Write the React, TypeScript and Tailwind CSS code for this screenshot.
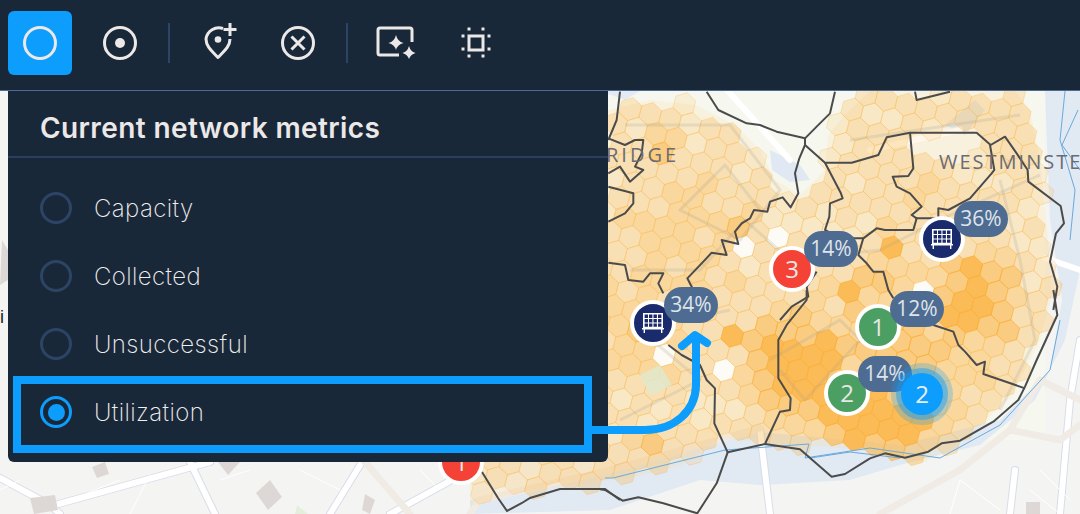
const hexRegion: number[][] = [
  [470, 470], [470, 506], [520, 492], [600, 482], [640, 476], [680, 466], [720, 438], [760, 442], [830, 447],
  [880, 452], [925, 462], [960, 442], [1010, 398], [1040, 340], [1052, 295], [1047, 230], [1040, 160], [1030, 110],
  [1015, 91], [870, 91], [845, 115], [828, 135], [825, 170], [800, 195], [775, 180], [760, 150], [735, 125],
  [695, 105], [650, 100], [608, 110], [590, 300],
]

const hexHoles: number[][][] = [
  [[915, 130], [972, 130], [985, 150], [950, 165], [915, 158]],
]

// x, y, radius, strength
const hotSpots: number[][] = [
  [975, 292, 36, 1], [955, 312, 24, 0.95], [800, 365, 50, 1], [860, 410, 46, 1], [905, 420, 32, 1], [772, 345, 26, 0.9],
  [735, 330, 12, 0.95], [645, 445, 10, 1], [745, 222, 10, 0.85], [855, 287, 16, 0.95], [893, 243, 14, 0.85], [663, 147, 16, 0.6],
  [995, 320, 24, 0.62], [640, 330, 60, 0.48], [900, 340, 80, 0.62], [680, 240, 80, 0.38], [920, 210, 80, 0.26],
]

const whiteSpots: number[][] = [[750, 241], [783, 231], [668, 362], [726, 378], [926, 286], [664, 345]]

const inside = (x: number, y: number, poly: number[][]) => {
  let hit = false
  for (let i = 0, j = poly.length - 1; i < poly.length; j = i++) {
    const [xi, yi] = poly[i]
    const [xj, yj] = poly[j]
    if (yi > y !== yj > y && x < ((xj - xi) * (y - yi)) / (yj - yi) + xi) hit = !hit
  }
  return hit
}

const noise = (a: number, b: number) => {
  const s = Math.sin(a * 127.1 + b * 311.7) * 43758.5453
  return s - Math.floor(s)
}

const buildHexes = () => {
  const out: { points: string; alpha: number; white: boolean }[] = []
  const pitch = 20.5
  const rowPitch = pitch * 0.866
  const r = pitch / Math.sqrt(3)
  const rot = (14 * Math.PI) / 180
  const cos = Math.cos(rot)
  const sin = Math.sin(rot)
  for (let row = -30; row < 30; row++) {
    for (let col = -40; col < 40; col++) {
      const gx = col * pitch + (row % 2 !== 0 ? pitch / 2 : 0)
      const gy = row * rowPitch
      const x = 957 + gx * cos - gy * sin
      const y = 282 + gx * sin + gy * cos
      if (!inside(x, y, hexRegion) || hexHoles.some((h) => inside(x, y, h))) continue
      let level = 0.14 + noise(col, row) * 0.14
      for (const [hx, hy, hr, hs] of hotSpots) {
        const d = ((x - hx) ** 2 + (y - hy) ** 2) / (hr * hr)
        level = Math.max(level, hs * Math.exp(-d * 0.7) + (noise(row, col) - 0.5) * 0.2)
      }
      const alpha = level > 0.72 ? 0.85 : level > 0.48 ? 0.58 : level > 0.3 ? 0.4 : level > 0.18 ? 0.26 : 0.14
      const pts: string[] = []
      for (let k = 0; k < 6; k++) {
        const a = rot + Math.PI / 6 + (k * Math.PI) / 3
        pts.push(`${(x + r * Math.cos(a)).toFixed(1)},${(y + r * Math.sin(a)).toFixed(1)}`)
      }
      const white = whiteSpots.some(([wx, wy]) => Math.hypot(x - wx, y - wy) < 10.5)
      out.push({ points: pts.join(' '), alpha, white })
    }
  }
  return out
}

const hexes = buildHexes()

const upperLines = [
  '320,5 355,60 440,100 480,105 530,125 615,145 650,110 690,70 705,5',
  '615,145 615,165 598,205 585,250 595,310 572,352 548,322 510,335 502,365 462,360 450,385 425,400 405,425 415,462 365,450 380,495 335,488 310,515 262,565 280,600',
  '615,165 675,218 755,218 835,195 860,142 930,128 1130,128 1172,165 1215,140 1250,190 1283,240 1285,275 1382,348 1392,400 1368,430 1350,515 1372,590 1360,660',
  '675,218 722,308 728,325 690,340 688,380 675,420 720,445 790,445 830,415 855,420 940,420 950,385 935,375 965,350 930,310 890,290 878,260 925,258 940,235 930,128',
  '790,445 775,495 800,520 820,545 850,545 865,600 880,625',
  '945,385 1015,385 1015,355 1045,360 1110,325 1175,250 1183,240 1170,165',
  '650,545 620,590 625,620 575,650 540,690',
  '945,5 950,30 1050,5',
  '60,5 50,90 25,150',
  '25,145 75,165 105,150 130,150 125,190 105,230 130,240 90,275 60,230 25,250',
  '25,290 100,310 100,340 75,370 25,395',
  '25,518 75,525 85,570 130,575 150,550 190,550 175,580 190,610',
]

const lowerLines = [
  '205,165 245,195 300,225 320,270 345,295 343,400 383,487 495,462 540,365 570,360 572,325 535,265 535,150 560,105 620,30 620,0',
  '383,487 350,580 292,670 190,640 115,622 68,632 15,600 0,598',
  '495,462 600,478 695,560 735,552 810,505 855,490 915,503 985,485 1025,460 1080,452 1180,395 1255,330 1275,290 1310,210 1372,75 1360,0',
  '1275,295 1150,252 1155,215 1130,225 1095,185 1075,165 1060,125 1000,105',
]

const Building = () => (
  <svg viewBox="0 0 22 20" className="h-5 w-[22px]" fill="#fff">
    <path d="M1 0H21V15H1Z" />
    <path d="M2.6 1.6h3.4v3.4H2.6zM7 1.6h3.4v3.4H7zM11.5 1.6h3.4v3.4h-3.4zM16 1.6h3.4v3.4H16zM2.6 6h3.4v3.4H2.6zM7 6h3.4v3.4H7zM11.5 6h3.4v3.4h-3.4zM16 6h3.4v3.4H16zM2.6 10.4h3.4v3.4H2.6zM7 10.4h3.4v3.4H7zM11.5 10.4h3.4v3.4h-3.4zM16 10.4h3.4v3.4H16z" fill="#1a2b6d" />
    <path d="M0 15h22v1.4H20.4V20H19v-3.6H3V20H1.6v-3.6H0Z" />
  </svg>
)

const Badge = ({ label, className }: { label: string; className: string }) => (
  <div className={`absolute flex h-9 w-[54px] items-center justify-center rounded-[18px] bg-[#4e6b91] font-['Open_Sans',sans-serif] text-[21px] text-[#dfe4ea] ${className}`}>
    {label}
  </div>
)

const Pin = ({ className, children }: { className: string; children: React.ReactNode }) => (
  <div className={`absolute flex h-[46px] w-[46px] items-center justify-center rounded-full border-4 border-white font-['Open_Sans',sans-serif] text-[24px] text-[#e6e8e6] ${className}`}>
    {children}
  </div>
)

const Metric = ({ label, active }: { label: string; active?: boolean }) => (
  <div className="flex h-[68px] items-center pl-8">
    <div className={`flex h-8 w-8 items-center justify-center rounded-full border-[3.5px] ${active ? 'border-[#0d9dfc]' : 'border-[#2c4565]'}`}>
      {active && <div className="h-[17px] w-[17px] rounded-full bg-[#0d9dfc]" />}
    </div>
    <span className="ml-[22px] pt-0.5 font-['Inter',sans-serif] text-[24px] font-extralight tracking-[0.4px] text-[#f1eeee]">{label}</span>
  </div>
)

const ToolButton = ({ active, view, children }: { active?: boolean; view: string; children: React.ReactNode }) => (
  <button className={`flex h-16 w-16 items-center justify-center rounded-md ${active ? 'bg-[#0d9dfc]' : ''}`}>
    <svg viewBox={view} className="h-16 w-16" fill="none" stroke="#ece8e8" strokeWidth="3">
      {children}
    </svg>
  </button>
)

const Divider = () => <div className="h-10 w-0.5 bg-[#2c4565]" />

const MapLayer = () => (
  <svg viewBox="0 91 1080 423" className="block h-[423px] w-[1080px]">
    <rect x="0" y="91" width="1080" height="423" fill="#f4f5f3" />
    <path d="M608 91 H1045 V440 H608Z" fill="#f6f8ef" />
    {/* river and ponds */}
    <path d="M600 470 L760 432 L900 445 L1000 420 L1050 370 L1062 300 L1050 220 L1045 91 L1080 91 L1080 270 L1065 340 L1035 400 L980 445 L900 465 L850 480 L760 485 L700 480 L610 510 L470 514 L470 500Z" fill="#e1e9f3" />
    <path d="M770 150 L800 165 L810 180 L790 182 L772 170Z" fill="#dfe8f3" />
    <path d="M945 125 L975 100 L985 110 L965 135Z" fill="#dfe8f3" />
    <path d="M600 91 L640 91 L625 100Z" fill="#e3eaf3" />
    {/* roads */}
    <g fill="none" strokeLinecap="round" strokeLinejoin="round">
      <g stroke="#d9dcea" strokeWidth="8">
        <path d="M0 478 L50 505 L60 514" />
        <path d="M55 505 L210 462" />
        <path d="M190 462 L215 514" />
        <path d="M330 514 L362 462" />
        <path d="M390 514 L470 470" />
        <path d="M760 430 L770 514" />
        <path d="M1060 514 L1070 400 L1080 340" />
        <path d="M1010 514 L1015 470" />
      </g>
      <g stroke="#ffffff" strokeWidth="6">
        <path d="M0 478 L50 505 L60 514" />
        <path d="M55 505 L210 462" />
        <path d="M190 462 L215 514" />
        <path d="M330 514 L362 462" />
        <path d="M390 514 L470 470" />
        <path d="M760 430 L770 514" />
        <path d="M1060 514 L1070 400 L1080 340" />
        <path d="M1010 514 L1015 470" />
        <path d="M1045 258 L1080 270" />
        <path d="M870 150 L960 130" />
        <path d="M728 91 L790 160" />
      </g>
      <g stroke="#f1ebe6" strokeWidth="7">
        <path d="M365 462 L410 514" />
        <path d="M470 514 L480 500 L610 470 L760 428" />
        <path d="M880 514 L960 470 L1010 430 L1060 440 L1080 425" />
        <path d="M1010 430 L1040 380 L1080 400" />
      </g>
      <g stroke="#ffffff" strokeWidth="1">
        <path d="M0 490 L20 480 M70 500 L120 480 M130 514 L150 475 M220 480 L250 470 M300 470 L340 490 M420 470 L440 490" />
        <path d="M950 514 L960 480 L1000 510 M1040 470 L1070 500 M1030 490 L1060 514" />
      </g>
    </g>
    <g fill="#ddd8d6">
      <path d="M256 493 L270 480 L282 497 L268 510Z" />
      <path d="M30 498 L55 495 L58 510 L34 514Z" />
      <path d="M92 467 L105 462 L109 474 L97 478Z" />
      <path d="M218 462 L240 462 L228 475Z" />
      <path d="M1026 502 L1040 502 L1040 514 L1026 514Z" />
      <path d="M365 494 L375 500 L370 514 L362 510Z" />
    </g>
    <path d="M297 505 L308 514 L295 514Z" fill="#e5eedd" />
    <path d="M2 240 L8 250 L8 280 L0 285Z" fill="#ddd8d6" />
    {/* heat hexes */}
    <polygon points={hexRegion.map((p) => p.join(',')).join(' ')} fill="#fbdca0" fillOpacity="0.22" />
    <g>
      {hexes.map((h, i) => (
        <polygon key={i} points={h.points} fill={h.white ? '#ffffff' : '#fcb23e'} fillOpacity={h.white ? 0.7 : h.alpha} stroke="#fbab2c" strokeOpacity={h.alpha > 0.5 ? 0.7 : 0.32} strokeWidth="0.8" />
      ))}
    </g>
    {/* ghost streets through the heat layer */}
    <g fill="none" stroke="#a89f90" strokeOpacity="0.22" strokeWidth="3" strokeLinejoin="round">
      <path d="M625 125 L730 125 L780 190 L740 240 L680 210 L725 165 L760 210" />
      <path d="M630 270 L700 270 L745 220 L790 260 L880 250 L950 215 L1040 175" />
      <path d="M620 420 L700 380 L640 330 L730 310" />
      <path d="M770 360 L840 320 L860 340 L805 400 L780 370" />
      <path d="M1000 180 L1020 260 L1035 340 L1000 410" />
      <path d="M850 140 L1020 115" />
    </g>
    <path d="M640 375 L660 365 L672 385 L650 395Z" fill="#dfead0" fillOpacity="0.8" />
    {/* water outlines */}
    <g fill="none" stroke="#6aa9dc" strokeWidth="1">
      <path d="M605 478 L613 478 L725 450 L809 444 L805 458 L870 448 L940 458 L1000 425 L1050 370 L1060 320" />
      <path d="M810 458 L850 452 L900 458" />
      <path d="M1065 91 L1060 140 L1075 190 L1070 240 M1078 110 L1062 145 L1080 170" />
    </g>
    {/* ward boundaries */}
    <g fill="none" stroke="#4b4b4b" strokeWidth="6" strokeLinejoin="round" transform="translate(600 90) scale(0.33333)">
      {upperLines.map((p, i) => <polyline key={i} points={p} />)}
    </g>
    <g fill="none" stroke="#4b4b4b" strokeWidth="6" strokeLinejoin="round" transform="translate(600 290) scale(0.33333)">
      {lowerLines.map((p, i) => <polyline key={i} points={p} />)}
    </g>
    <polyline points="482,472 498,498 507,511 522,503 530,498 560,489 605,489 620,500" fill="none" stroke="#4b4b4b" strokeWidth="2" />
    <g fontFamily="'Open Sans', sans-serif" fill="#6c6a72" fontSize="20">
      <text x="606" y="162" letterSpacing="3">RIDGE</text>
      <text x="939" y="169" letterSpacing="2">WESTMINSTE</text>
    </g>
    <text x="0" y="323" fontFamily="'Liberation Sans', sans-serif" fontSize="18" fill="#222">i</text>
  </svg>
)

export default function App() {
  return (
    <div className="flex h-[514px] w-[1080px] flex-col overflow-hidden bg-[#192839]">
      <header className="flex h-[91px] shrink-0 items-center gap-4 border-b border-[#4c6a94] bg-[#192839] pb-[5px] pl-2">
        <ToolButton active view="8 11 64 64">
          <circle cx="40" cy="43" r="15.5" />
        </ToolButton>
        <ToolButton view="88 11 64 64">
          <circle cx="120" cy="43" r="15.5" />
          <circle cx="120" cy="43" r="5" fill="#ece8e8" stroke="none" />
        </ToolButton>
        <Divider />
        <ToolButton view="186 11 64 64">
          <path d="M223 28.5 A13 13 0 0 0 206 39 C206 47 213 52 218 57.5 C223 52 230 47 230 39" strokeLinejoin="round" />
          <circle cx="218" cy="39.5" r="3.3" fill="#ece8e8" stroke="none" />
          <path d="M230 23 V36 M223.5 29.5 H236.5" />
        </ToolButton>
        <ToolButton view="266 11 64 64">
          <circle cx="298" cy="43" r="15.5" />
          <path d="M291.5 36.5 L304.5 49.5 M304.5 36.5 L291.5 49.5" />
        </ToolButton>
        <Divider />
        <ToolButton view="364 11 64 64">
          <path d="M412 42 V30 a2 2 0 0 0 -2 -2 H380 a2 2 0 0 0 -2 2 V53 a2 2 0 0 0 2 2 H399" />
          <path d="M396 35 Q397.5 41.5 403.5 43 Q397.5 44.5 396 50 Q394.5 44.5 388.5 43 Q394.5 41.5 396 35Z" fill="#ece8e8" stroke="none" />
          <path d="M409 46 Q410.5 51.5 415.5 53 Q410.5 54.5 409 59 Q407.5 54.5 402.5 53 Q407.5 51.5 409 46Z" fill="#ece8e8" stroke="none" />
        </ToolButton>
        <ToolButton view="444 11 64 64">
          <rect x="469" y="36" width="14" height="14" />
          <path d="M467.5 27.5h3v3h-3zM481.5 27.5h3v3h-3zM461.5 34.5h3v3h-3zM487.5 34.5h3v3h-3zM461.5 47.5h3v3h-3zM487.5 47.5h3v3h-3zM467.5 54.5h3v3h-3zM481.5 54.5h3v3h-3z" fill="#ece8e8" stroke="none" />
        </ToolButton>
      </header>

      <main className="relative flex-1">
        <MapLayer />

        <Pin className="left-[438px] top-[348px] bg-[#f44336]">1</Pin>
        <Pin className="left-[630px] top-[209px] bg-[#1a2b6d]"><Building /></Pin>
        <Badge label="34%" className="left-[664px] top-[196px]" />
        <Pin className="left-[769px] top-[155px] bg-[#f44336]">3</Pin>
        <Badge label="14%" className="left-[804px] top-[140px]" />
        <Pin className="left-[919px] top-[125px] bg-[#1a2b6d]"><Building /></Pin>
        <Badge label="36%" className="left-[954px] top-[110px]" />
        <Pin className="left-[855px] top-[213px] bg-[#4c9f62]">1</Pin>
        <Badge label="12%" className="left-[890px] top-[200px]" />
        <Pin className="left-[824px] top-[279px] bg-[#4c9f62]">2</Pin>
        <Badge label="14%" className="left-[858px] top-[265px]" />
        <div className="absolute left-[891px] top-[272px] flex h-[62px] w-[62px] items-center justify-center rounded-full bg-[#0d9dfc]/25">
          <div className="flex h-[52px] w-[52px] items-center justify-center rounded-full bg-[#0d9dfc]/45">
            <div className="flex h-[42px] w-[42px] items-center justify-center rounded-full bg-[#0d9dfc] font-['Open_Sans',sans-serif] text-[24px] text-[#e6eef5]">2</div>
          </div>
        </div>

        <section className="absolute left-2 top-0 h-[371px] w-[600px] rounded-b-md bg-[#192839]">
          <div className="flex h-[67px] items-center border-b-2 border-[#2a3f5f] pl-8 pt-[8px]">
            <h2 className="font-['Inter',sans-serif] text-[28px] font-semibold tracking-[0.4px] text-[#ece8e8]">Current network metrics</h2>
          </div>
          <div className="pt-4">
            <Metric label="Capacity" />
            <Metric label="Collected" />
            <Metric label="Unsuccessful" />
            <Metric label="Utilization" active />
          </div>
        </section>

        <div className="absolute left-[13px] top-[285px] h-[77px] w-[579px] border-8 border-[#0d9dfc]" />
        <svg viewBox="0 0 130 120" className="absolute left-[585px] top-[235px] h-[120px] w-[130px]" fill="none" stroke="#0d9dfc" strokeWidth="8" strokeLinecap="round" strokeLinejoin="round">
          <path d="M7 104 H60 C90 104 110 85 111 60 V8" strokeLinecap="butt" />
          <path d="M97 20 L110 9 L122 17" />
        </svg>
      </main>
    </div>
  )
}
